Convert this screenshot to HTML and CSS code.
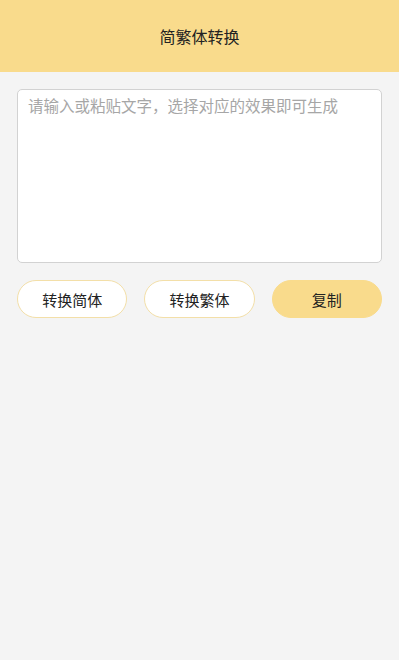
FILE: index.html
```html
<!DOCTYPE html>
<html lang="zh-CN">
<head>
<meta charset="utf-8">
<title>简繁体转换</title>
<link rel="stylesheet" href="styles.css">
</head>
<body>
<header class="topbar">简繁体转换</header>
<main class="content">
  <textarea class="input" placeholder="请输入或粘贴文字，选择对应的效果即可生成"></textarea>
  <div class="actions">
    <button class="btn btn-outline">转换简体</button>
    <button class="btn btn-outline">转换繁体</button>
    <button class="btn btn-fill">复制</button>
  </div>
</main>
</body>
</html>
```
FILE: styles.css
```css
html, body {
  margin: 0;
  padding: 0;
  background: #f4f4f4;
  font-family: "Noto Sans CJK SC", "Noto Sans", sans-serif;
  height: 100%;
}
.topbar {
  height: 72px;
  background: #f9db8c;
  display: flex;
  align-items: center;
  justify-content: center;
  font-size: 16px;
  color: #222;
}
.content {
  padding: 17px 17px 0;
}
.input {
  display: block;
  box-sizing: border-box;
  width: 100%;
  height: 174px;
  margin: 0;
  padding: 3px 10px;
  border: 1px solid #d2d2d2;
  border-radius: 5px;
  background: #fff;
  font-family: inherit;
  font-size: 15.5px;
  line-height: 24px;
  color: #333;
  resize: none;
  outline: none;
}
.input::placeholder {
  color: #a6a6a6;
}
.actions {
  display: flex;
  gap: 17px;
  margin-top: 17px;
}
.btn {
  flex: 1;
  height: 38px;
  border-radius: 19px;
  font-family: inherit;
  font-size: 15px;
  color: #222;
  padding: 0;
  box-sizing: border-box;
}
.btn-outline {
  background: #fff;
  border: 1px solid #f3dfa8;
}
.btn-fill {
  background: #f9db8c;
  border: 1px solid #f9db8c;
}
```
